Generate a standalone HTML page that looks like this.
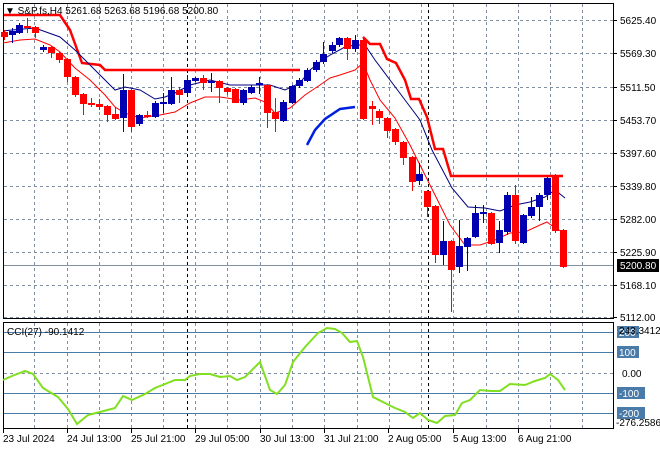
<!DOCTYPE html>
<html><head><meta charset="utf-8"><style>
html,body{margin:0;padding:0;background:#fff;}
svg{display:block;font-family:"Liberation Sans",sans-serif;font-size:10px;}
</style></head><body>
<svg id="s" width="660" height="450" xmlns="http://www.w3.org/2000/svg">
<rect width="660" height="450" fill="#fff"/>
<g id="grid" stroke="#8090a0" stroke-dasharray="3,3" stroke-width="1"></g>
<rect x="3.5" y="3.5" width="610" height="315" fill="none" stroke="#000"/>
<rect x="3.5" y="322.5" width="610" height="106" fill="none" stroke="#000"/>
<g id="ind"></g>
<line x1="4" y1="265.5" x2="613" y2="265.5" stroke="#8090a0"/>
<g id="lines" fill="none"></g>
<g id="cdl"></g>
<g id="txt" fill="#000"></g>
</svg>
<script>
var NS="http://www.w3.org/2000/svg";
function el(p,t,a,txt){var e=document.createElementNS(NS,t);for(var k in a)e.setAttribute(k,a[k]);if(txt!=null)e.textContent=txt;document.getElementById(p).appendChild(e);return e;}
var gx=[34,67,99,131,163,195,227,260,292,324,357,389,421,453,486,518,550,582];
gx.forEach(function(x){el('grid','line',{x1:x+.5,y1:4,x2:x+.5,y2:318});el('grid','line',{x1:x+.5,y1:323,x2:x+.5,y2:428});});
[187,428].forEach(function(x){el('grid','line',{x1:x+.5,y1:4,x2:x+.5,y2:318,stroke:'#000'});el('grid','line',{x1:x+.5,y1:323,x2:x+.5,y2:428,stroke:'#000'});});
var gy=[20,53,87,120,153,186,219,252,285,317];
gy.forEach(function(y){el('grid','line',{x1:4,y1:y+.5,x2:613,y2:y+.5});});
el('grid','line',{x1:4,y1:373.5,x2:613,y2:373.5});
[332,352,393,413].forEach(function(y){el('ind','line',{x1:4,y1:y+.5,x2:613,y2:y+.5,stroke:'#4a7aa8'});});
var C=[[4,32,37,30,40,'r'],[12,31,35,28,43,'b'],[19,25,33,23,34,'b'],[27,26,28,18,33,'r'],[35,27,33,26,38,'r'],[43,47,50,45,52,'b'],[51,47,53,46,58,'r'],[59,53,60,52,63,'r'],[67,59,77,58,82,'r'],[75,77,95,76,97,'r'],[83,94,104,93,115,'r'],[91,103,105,98,107,'r'],[99,104,107,99,110,'r'],[107,106,115,105,122,'r'],[115,114,119,107,120,'r'],[123,90,118,74,132,'b'],[131,90,127,89,132,'r'],[139,115,124,114,126,'b'],[147,115,117,111,118,'r'],[155,103,117,101,118,'b'],[163,102,104,93,113,'b'],[171,90,104,77,105,'b'],[179,90,95,87,103,'r'],[187,80,93,75,95,'b'],[195,78,81,77,82,'b'],[203,78,83,75,90,'r'],[211,81,83,73,92,'b'],[219,81,88,80,103,'r'],[227,88,92,87,95,'r'],[235,89,103,88,103,'r'],[243,90,103,89,105,'b'],[251,87,93,85,94,'b'],[259,83,84,77,94,'b'],[267,85,113,84,128,'r'],[275,112,119,98,132,'r'],[283,102,121,100,122,'b'],[292,86,103,85,104,'b'],[299,80,86,78,88,'b'],[307,70,81,68,82,'b'],[316,62,70,60,72,'b'],[323,54,62,42,64,'b'],[332,45,51,42,53,'b'],[339,38,45,37,47,'b'],[347,38,49,37,60,'r'],[355,40,49,35,52,'b'],[363,40,119,38,120,'r'],[372,106,109,101,125,'r'],[379,111,118,109,124,'r'],[387,118,131,117,138,'r'],[395,129,142,128,145,'r'],[403,142,158,141,165,'r'],[412,157,182,156,191,'r'],[419,174,181,163,185,'b'],[427,191,207,190,217,'r'],[435,206,255,205,263,'r'],[443,241,255,221,265,'b'],[451,241,270,240,312,'r'],[459,246,267,220,273,'b'],[467,238,247,237,271,'b'],[475,213,237,205,238,'b'],[483,212,214,205,223,'b'],[491,213,244,212,245,'r'],[499,230,243,221,253,'b'],[507,195,232,192,235,'b'],[515,195,241,185,244,'r'],[523,215,243,214,244,'b'],[531,207,216,197,218,'b'],[539,195,207,193,221,'b'],[547,178,195,177,200,'b'],[555,175,231,174,233,'r'],[563,230,267,229,268,'r']];
C.forEach(function(c){var col=c[5]=='r'?'#ff0000':'#0000b0';
el('cdl','line',{x1:c[0]+.5,y1:c[3],x2:c[0]+.5,y2:c[4],stroke:col});
var h=Math.max(c[2]-c[1],2);el('cdl','rect',{x:c[0]-3,y:c[1],width:7,height:h,fill:col});});
function pl(pts,col,w){el('lines','polyline',{points:pts.map(function(p){return p.join(',')}).join(' '),stroke:col,'stroke-width':w});}
pl([[4,15],[60,15],[70,30],[82,63],[100,65],[105,70],[300,70]],'#ff0000',2.5);
pl([[363,37],[370,44],[380,44],[387,59],[396,63],[405,80],[411,99],[419,99],[427,117],[435,149],[443,149],[451,176],[563,176]],'#ff0000',2.5);
pl([[3,31],[12,30],[35,28],[60,37],[75,50],[90,65],[100,75],[110,85],[115,90],[125,87],[140,90],[155,99],[165,97],[175,93],[190,85],[210,80],[230,85],[250,85],[270,85],[285,90],[300,83],[310,70],[320,62],[330,55],[345,47],[355,45],[365,45],[375,60],[390,80],[405,100],[420,120],[432,150],[452,188],[468,207],[485,208],[500,211],[515,205],[530,202],[545,197],[555,190],[565,198]],'#000080',1);
pl([[3,43],[20,40],[35,39],[50,45],[60,52],[75,68],[90,80],[105,95],[115,107],[125,113],[140,118],[160,115],[175,112],[190,103],[205,97],[220,97],[240,100],[255,98],[265,102],[275,113],[290,108],[305,95],[320,85],[330,78],[340,75],[355,70],[363,63],[370,80],[380,100],[395,118],[410,145],[420,165],[430,185],[440,205],[450,225],[465,245],[480,245],[495,240],[510,233],[525,232],[540,225],[547,222],[555,228],[563,232]],'#ff0000',1);
pl([[307,145],[315,130],[325,119],[340,109],[355,107]],'#0020e0',2.5);
pl([[3,380],[12,376],[25,371],[33,374],[43,388],[58,397],[68,409],[77,424],[88,415],[100,412],[115,408],[123,396],[132,400],[145,394],[155,388],[165,384],[175,380],[185,380],[190,376],[200,374],[210,374],[220,377],[230,376],[237,380],[245,377],[260,362],[270,390],[277,394],[285,385],[293,362],[305,347],[318,333],[327,328],[335,329],[342,333],[350,342],[357,341],[363,357],[373,397],[385,403],[395,408],[405,412],[413,418],[420,413],[428,420],[437,423],[445,416],[455,415],[462,403],[470,400],[480,390],[490,391],[500,391],[510,384],[525,385],[535,381],[545,378],[550,374],[558,380],[565,390]],'#80e020',2);
var pr=['5625.40','5569.30','5511.50','5453.70','5397.60','5339.80','5282.00','5225.90','5168.10','5112.00'];
pr.forEach(function(t,i){el('txt','line',{x1:614,y1:gy[i]+.5,x2:617,y2:gy[i]+.5,stroke:'#000'});el('txt','text',{x:620,y:gy[i]+4},t);});
el('txt','rect',{x:617,y:259,width:42,height:13,fill:'#000'});
el('txt','text',{x:620,y:269,fill:'#fff'},'5200.80');
el('txt','text',{x:5,y:14},'\u25BC S&P.fs,H4  5261.68 5263.68 5196.68 5200.80');
el('txt','text',{x:7,y:335},'CCI(27) -90.1412');
[[332,'200'],[352,'100'],[393,'-100'],[413,'-200']].forEach(function(a){el('txt','rect',{x:617,y:a[0]-6,width:a[1].length*6+4,height:12,fill:'#4a7aa8'});el('txt','text',{x:619,y:a[0]+4,fill:'#fff'},a[1]);});
el('txt','text',{x:619,y:334},'243.3412');
el('txt','text',{x:622,y:377},'0.00');
el('txt','text',{x:616,y:426},'-276.2586');
var tl=[[3,'23 Jul 2024'],[67,'24 Jul 13:00'],[131,'25 Jul 21:00'],[195,'29 Jul 05:00'],[260,'30 Jul 13:00'],[324,'31 Jul 21:00'],[388,'2 Aug 05:00'],[453,'5 Aug 13:00'],[518,'6 Aug 21:00']];
tl.forEach(function(a){el('txt','line',{x1:a[0]+.5,y1:429,x2:a[0]+.5,y2:433,stroke:'#000'});el('txt','text',{x:a[0],y:442},a[1]);});
</script>
</body></html>
